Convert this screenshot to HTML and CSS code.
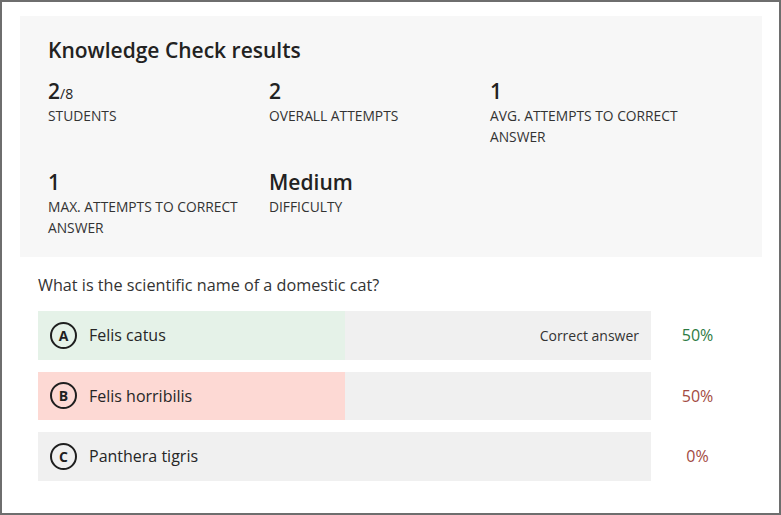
FILE: index.html
```html
<!DOCTYPE html>
<html lang="en">
<head>
<meta charset="utf-8">
<title>Knowledge Check results</title>
<link rel="stylesheet" href="styles.css">
</head>
<body>
<div class="frame">
  <section class="summary">
    <h1 class="title">Knowledge Check results</h1>
    <div class="stats">
      <div class="stat">
        <div class="value">2<span class="of">/8</span></div>
        <div class="label">Students</div>
      </div>
      <div class="stat">
        <div class="value">2</div>
        <div class="label">Overall attempts</div>
      </div>
      <div class="stat">
        <div class="value">1</div>
        <div class="label">Avg. attempts to correct answer</div>
      </div>
      <div class="stat">
        <div class="value">1</div>
        <div class="label">Max. attempts to correct answer</div>
      </div>
      <div class="stat">
        <div class="value">Medium</div>
        <div class="label">Difficulty</div>
      </div>
    </div>
  </section>
  <section class="question">
    <p class="prompt">What is the scientific name of a domestic cat?</p>
    <ul class="answers">
      <li class="answer">
        <div class="bar">
          <div class="fill fill-correct" style="width:50%"></div>
          <span class="letter">A</span>
          <span class="text">Felis catus</span>
          <span class="note">Correct answer</span>
        </div>
        <span class="pct pct-correct">50%</span>
      </li>
      <li class="answer">
        <div class="bar">
          <div class="fill fill-wrong" style="width:50%"></div>
          <span class="letter">B</span>
          <span class="text">Felis horribilis</span>
        </div>
        <span class="pct pct-wrong">50%</span>
      </li>
      <li class="answer">
        <div class="bar">
          <span class="letter">C</span>
          <span class="text">Panthera tigris</span>
        </div>
        <span class="pct pct-wrong">0%</span>
      </li>
    </ul>
  </section>
</div>
</body>
</html>
```

FILE: styles.css
```css
* { box-sizing: border-box; }

html, body {
  margin: 0;
  padding: 0;
  background: #ffffff;
}

body {
  font-family: "Open Sans", "Noto Sans", sans-serif;
  color: #262626;
}

.frame {
  width: 781px;
  height: 515px;
  border: 2px solid #6e6e6e;
  padding: 14px 17px 0 18px;
  overflow: hidden;
}

.summary {
  background: #f7f7f7;
  padding: 20px 28px 19px 28px;
}

.title {
  margin: 0;
  font-size: 21px;
  line-height: 28px;
  font-weight: 600;
  color: #222222;
}

.stats {
  margin-top: 13px;
  display: grid;
  grid-template-columns: repeat(3, 221px);
  row-gap: 21px;
}

.stat {
  padding-right: 16px;
}

.value {
  font-size: 21px;
  line-height: 28px;
  font-weight: 600;
  color: #222222;
}

.of {
  font-size: 14px;
  line-height: 1;
  font-weight: 400;
}

.label {
  font-size: 13.8px;
  line-height: 21px;
  text-transform: uppercase;
  color: #333333;
}

.question {
  padding: 17px 0 0 18px;
}

.prompt {
  margin: 0 0 15px 0;
  font-size: 16.2px;
  line-height: 22px;
  color: #333333;
}

.answers {
  list-style: none;
  margin: 0;
  padding: 0;
  display: flex;
  flex-direction: column;
  gap: 12px;
}

.answer {
  display: flex;
  align-items: center;
}

.bar {
  position: relative;
  width: 613px;
  height: 48.5px;
  background: #f0f0f0;
  display: flex;
  align-items: center;
  padding: 0 12px;
}

.fill {
  position: absolute;
  left: 0;
  top: 0;
  bottom: 0;
}

.fill-correct { background: #e5f2e8; }
.fill-wrong { background: #fdd9d4; }

.letter {
  position: relative;
  width: 27px;
  height: 27px;
  border: 2px solid #1f1f1f;
  border-radius: 50%;
  display: flex;
  align-items: center;
  justify-content: center;
  font-size: 14px;
  font-weight: 700;
  color: #1f1f1f;
  flex: none;
}

.text {
  position: relative;
  margin-left: 12px;
  font-size: 16px;
  color: #262626;
}

.note {
  position: relative;
  margin-left: auto;
  font-size: 14px;
  color: #333333;
}

.pct {
  width: 93px;
  text-align: center;
  font-size: 16px;
}

.pct-correct { color: #2c7a43; }
.pct-wrong { color: #a24a42; }
```
